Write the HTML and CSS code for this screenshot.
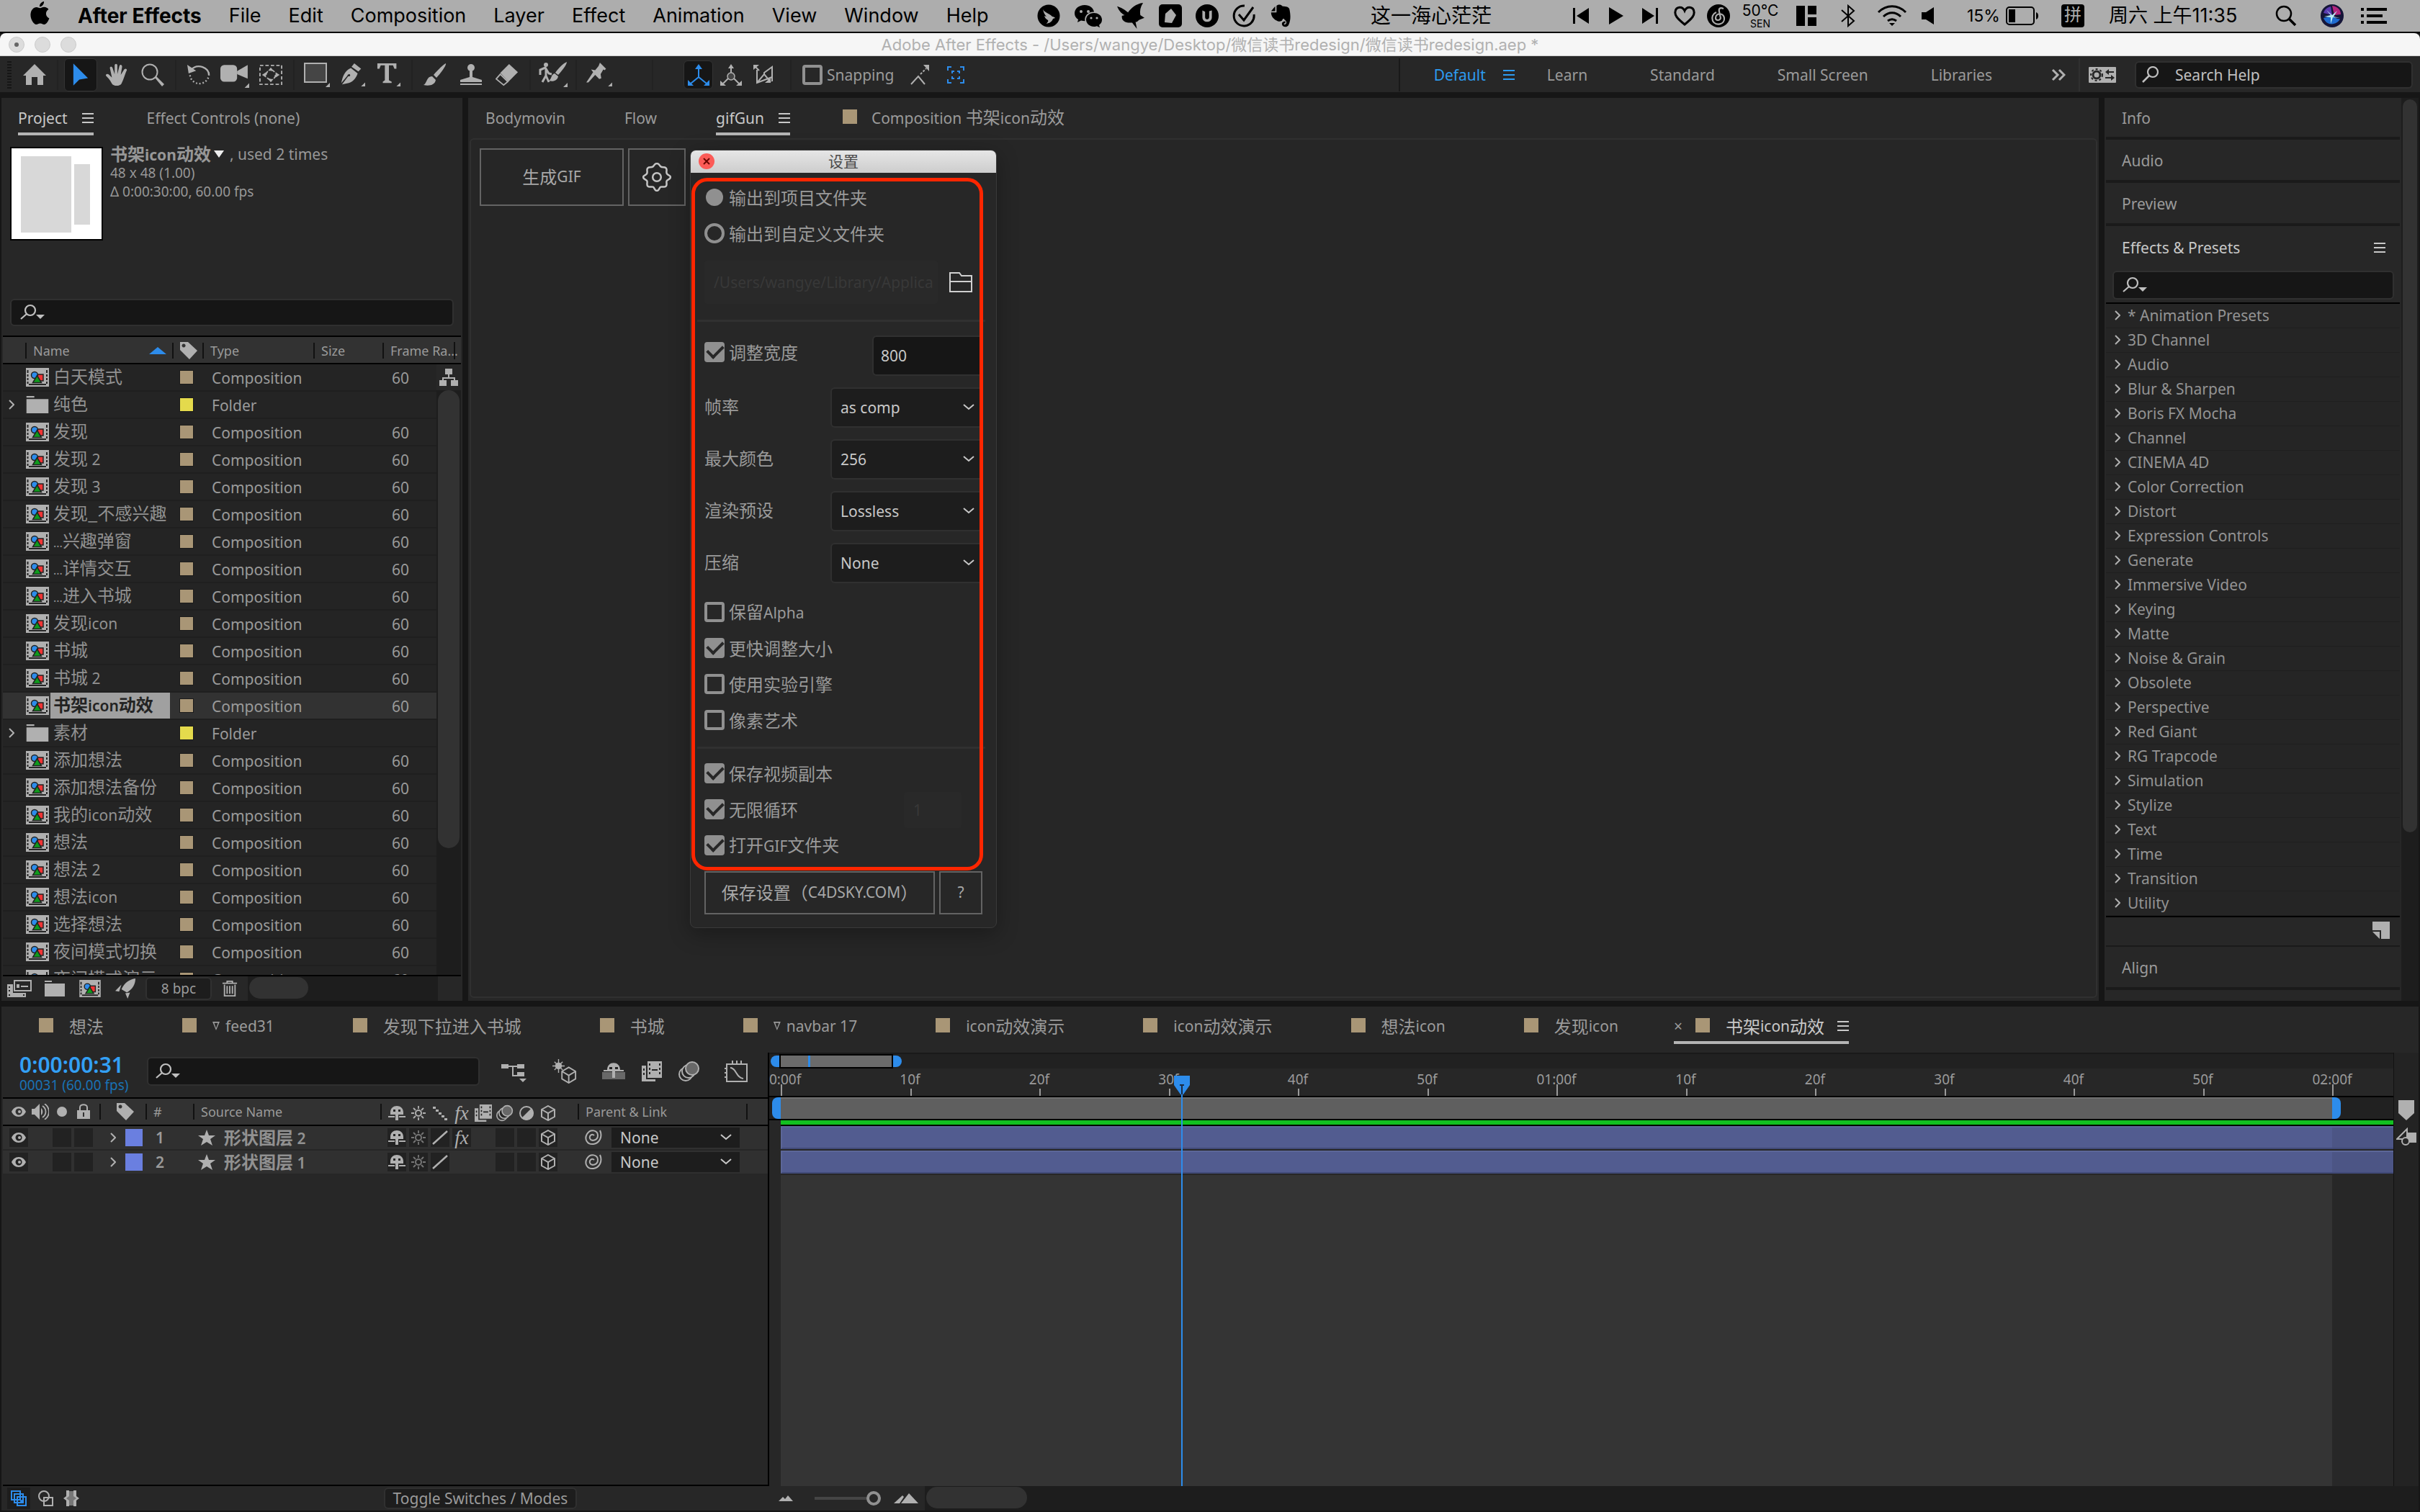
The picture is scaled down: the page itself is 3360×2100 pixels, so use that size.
FILE: index.html
```html
<!DOCTYPE html>
<html lang="zh-CN">
<head>
<meta charset="utf-8">
<title>Adobe After Effects</title>
<link rel="stylesheet" href="styles.css">
</head>
<body>
<svg class="sprite" aria-hidden="true">
  <symbol id="apple" viewBox="0 0 28 34"><path d="M19 0c.4 3.700-2.800 7.300-6 7.200C12.500 3.800 15.800.4 19 0zM13.800 9.200c1.200 0 3-1.500 5.600-1.400 2.500.1 4.700 1.200 6 3.200-5.200 3.200-4.300 10.200 1 12.400-1.200 3.500-4 8.400-6.900 8.500-2.300.1-3-1.400-5.600-1.400s-3.500 1.400-5.600 1.400C4.800 32-.2 24.300.5 17.300 1 11.700 4.600 8 8.500 7.900c2.300 0 4 1.300 5.300 1.300z"/></symbol>
  <symbol id="dove" viewBox="0 0 32 32"><circle cx="16" cy="16" r="15.500"/><path d="M8 7c3 5 8 5 13 10 2 0 3 1 4 2l-3 1c-2 6-7 6-9 7 1-2 3-3 2-5-3-2-4-3-5-6l3 1c-3-3-4-6-5-10z" fill="#adadad"/></symbol>
  <symbol id="wechat" viewBox="0 0 40 34"><path d="M15 2C7 2 1 7 1 13.500c0 4 2 6.500 5 8.500l-1 4 5-2.500c2 .5 3.500.7 5.500.7C14 17 20 11 28 11.500 27 6 22 2 15 2z"/><path d="M28 13c-7 0-11 4.500-11 9.500S22 32 28 32c1.500 0 3-.3 4-.7l4 2-1-3.500c2.500-2 4-4 4-7.300C39 17 34 13 28 13z"/><g fill="#adadad"><circle cx="10" cy="11" r="2"/><circle cx="20" cy="11" r="2"/><circle cx="24" cy="20" r="1.600"/><circle cx="32" cy="20" r="1.600"/></g></symbol>
  <symbol id="bird" viewBox="0 0 40 38"><path d="M0 5c6 2 10 4 16 9C20 8 28 1 38 0c-4 6-5 12-4 18l6 4-8 3c-2 2-3 3-5 3l2 10-7-9C12 30 6 26 7 19l4-1C5 15 2 10 0 5z"/></symbol>
  <symbol id="cardapp" viewBox="0 0 32 32"><rect width="32" height="32" rx="5"/><path d="M17 6l7 9-6 11-10-1 1-12z" fill="#adadad"/></symbol>
  <symbol id="uapp" viewBox="0 0 34 34"><circle cx="17" cy="17" r="17"/><path d="M10 9v10c0 9 14 9 14 0V9l-4 1v9c0 4-6 4-6 0v-8z" fill="#adadad"/><path d="M15 8l3 0v11l-3 0z"/></symbol>
  <symbol id="tickapp" viewBox="0 0 32 32"><path d="M17 2A14 14 0 1 0 30 14M9 14l7 8L29 4" fill="none" stroke="#000" stroke-width="3"/></symbol>
  <symbol id="elephant" viewBox="0 0 30 34"><path d="M9 2c4-3 8-1 9 1 5 0 9 1 10 4 2 9 2 17-1 23-2 5-10 4-10-1 0-4 5-4 5-4v3c-3 0-2 2-1 2 4-1 3-6 0-7-1-2-2-2-3-1-1 4-6 4-9 2C3 21 1 16 1 12h8z"/><path d="M7 3v7H1z"/></symbol>
  <symbol id="prev" viewBox="0 0 24 24"><path d="M1 1h3v22H1zM23 1v22L6 12z"/></symbol>
  <symbol id="play" viewBox="0 0 20 24"><path d="M0 0l20 12L0 24z"/></symbol>
  <symbol id="next" viewBox="0 0 24 24"><path d="M20 1h3v22h-3zM1 1l17 11L1 23z"/></symbol>
  <symbol id="heart" viewBox="0 0 30 28"><path d="M15 26C4 17 1 13 2 8c1-7 10-8 13-1 3-7 12-6 13 1 1 5-2 9-13 18z" fill="none" stroke="#000" stroke-width="3"/></symbol>
  <symbol id="netease" viewBox="0 0 32 32"><circle cx="16" cy="16" r="16"/><path d="M23 6c-5-2-7 0-6 4l2 9c-1 4-7 4-7 0 0-7 11-8 12 0 1 9-12 12-16 4-2-5 0-10 5-12" fill="none" stroke="#adadad" stroke-width="2.200"/></symbol>
  <symbol id="tiles" viewBox="0 0 28 28"><path d="M0 0h12v28H0zM16 0h12v12H16zM16 16h12v12H16z"/></symbol>
  <symbol id="bt" viewBox="0 0 20 32"><path d="M1 8l17 15-8 7V2l8 7L1 24" fill="none" stroke="#000" stroke-width="2"/></symbol>
  <symbol id="wifi" viewBox="0 0 42 30"><path d="M2 10c11-11 27-11 38 0M9 16c7-7 17-7 24 0M15 22c4-3 8-3 12 0" fill="none" stroke="#000" stroke-width="3"/><path d="M17 25h8l-4 4z"/></symbol>
  <symbol id="vol" viewBox="0 0 18 24"><path d="M0 7h6l11-7v24L6 17H0z"/></symbol>
  <symbol id="battery" viewBox="0 0 46 26"><rect x="1" y="1" width="38" height="24" rx="4" fill="none" stroke="#000" stroke-width="2"/><path d="M4 4h9v18H4zM42 8c4 1 4 9 0 10z"/></symbol>
  <symbol id="glass" viewBox="0 0 30 30"><circle cx="12" cy="12" r="10" fill="none" stroke="#000" stroke-width="2.500"/><path d="M19 19l9 9" stroke="#000" stroke-width="3.500"/></symbol>
  <symbol id="siri" viewBox="0 0 32 32"><circle cx="16" cy="16" r="16" fill="#151538"/><path d="M16 2c8 1 12 6 12 12l-9 1z" fill="#b3257e"/><path d="M4 12c2-6 6-8 10-9l2 12z" fill="#5b3bb0"/><path d="M4 19c5-1 10-2 12-4 3 4 8 6 11 5-3 8-18 12-23-1z" fill="#1f6bd0"/><path d="M8 8l8 7 7-6-5 8 9 2-10-1-3 9 0-9-9-1 9-2z" fill="#b8eef5"/></symbol>
  <symbol id="list" viewBox="0 0 36 22"><path d="M0 0h4v4H0zM8 0h28v4H8zM0 9h4v4H0zM8 9h22v4H8zM0 18h4v4H0zM8 18h28v4H8z"/></symbol>

  <symbol id="home" viewBox="0 0 32 32"><path d="M16 1L0 17h4v13h8V19h8v11h8V17h4z"/></symbol>
  <symbol id="arrow" viewBox="0 0 26 34"><path d="M2 0l22 22-13 2L2 33z"/></symbol>
  <symbol id="hand" viewBox="0 0 32 34"><path d="M9 30C6 24 3 21 0 18c0-3 3-3 5-1l4 4L6 7c0-3 3-3 4 0l3 9V3c0-3 4-3 4 0v13l3-12c1-3 4-2 4 1l-2 12 5-8c2-2 4-1 4 1-3 6-4 12-8 20-2 4-12 4-14 0z"/></symbol>
  <symbol id="zoomtool" viewBox="0 0 32 32"><circle cx="12" cy="12" r="10.500" fill="none" stroke="currentColor" stroke-width="2"/><path d="M19 20l2-2 11 11-3 3z"/></symbol>
  <symbol id="rotate" viewBox="0 0 34 32"><path d="M5 9c10-11 28-4 27 8" fill="none" stroke="currentColor" stroke-width="2.500"/><path d="M0 1l2 13 11-4z"/><path d="M31 20A14 14 0 0 1 4 16" fill="none" stroke="currentColor" stroke-width="2.500" stroke-dasharray="2 3"/></symbol>
  <symbol id="camera" viewBox="0 0 38 34"><rect y="4" width="22" height="22" rx="5"/><path d="M22 12l14-8v18l-14-6zM38 28v6h-6z"/></symbol>
  <symbol id="panbehind" viewBox="0 0 34 30"><rect x="1" y="1" width="32" height="28" fill="none" stroke="currentColor" stroke-width="2" stroke-dasharray="5 3"/><path d="M17 4l4 5h-8zM17 26l4-5h-8zM4 15l6-4v8zM30 15l-6-4v8z"/><circle cx="17" cy="15" r="7" fill="none" stroke="currentColor" stroke-width="2" stroke-dasharray="6 5"/></symbol>
  <symbol id="rect" viewBox="0 0 36 34"><rect x="1" y="1" width="30" height="26" fill="#454545" stroke="currentColor" stroke-width="2"/><path d="M36 28v6h-6z"/></symbol>
  <symbol id="pen" viewBox="0 0 36 36"><path d="M20 1l10 8-4 4-10-7zM15 8l10 8c-3 8-7 12-13 14l-10 2 9-12c3 1 4-2 2-3-2 0-3 1-3 2L1 30C3 20 6 12 15 8zM36 29v6h-6z"/></symbol>
  <symbol id="type" viewBox="0 0 34 36"><path d="M0 1h28v8h-3l-2-5h-6v22l4 2v2H8v-2l3-2V4H5L3 9H0zM34 29v6h-6z"/></symbol>
  <symbol id="brush" viewBox="0 0 32 32"><path d="M31 0c1 3-8 15-13 20l-4-4C20 9 28 1 31 0zM12 18l5 5c-1 7-9 9-17 7 5-2 4-12 12-12z"/></symbol>
  <symbol id="stamp" viewBox="0 0 32 30"><circle cx="16" cy="5" r="5"/><path d="M14 9h4v9l13 4v3H1v-3l13-4zM1 27h30v2H1z"/></symbol>
  <symbol id="eraser" viewBox="0 0 34 32"><path d="M20 0l13 12-14 14L7 13z"/><path d="M7 15l11 11-6 5L1 22z" fill="none" stroke="currentColor" stroke-width="2"/></symbol>
  <symbol id="roto" viewBox="0 0 40 36"><circle cx="10" cy="4" r="3"/><path d="M2 18V11l7-3 5 8 4 1M10 10v9l-5 9M10 19l4 9" fill="none" stroke="currentColor" stroke-width="3"/><path d="M39 0c0 4-8 14-12 18l-4-3C27 9 34 2 39 0zM22 16l5 4c-1 6-7 8-13 6 4-2 3-9 8-10zM40 29v6h-6z"/></symbol>
  <symbol id="pin" viewBox="0 0 38 36"><path d="M20 0l9 9-2 2-2-1-4 7 1 6-3 1-6-6L3 29l-3 0 10-15-3-4 6 1 5-6zM38 29v6h-6z"/></symbol>
  <symbol id="axis" viewBox="0 0 30 30"><path d="M15 4v14L4 27M15 18l11 9" fill="none" stroke="currentColor" stroke-width="2"/><path d="M15 0l5 7H10zM0 22v8h8zM30 22v8h-8z"/></symbol>
  <symbol id="worldaxis" viewBox="0 0 30 30"><path d="M15 4v8M11 20l-7 7M19 20l7 7" fill="none" stroke="currentColor" stroke-width="2"/><circle cx="15" cy="17" r="5" fill="#454545" stroke="currentColor" stroke-width="1.500"/><path d="M15 0l4 6h-8zM0 23v7h8zM30 23v7h-8z"/></symbol>
  <symbol id="viewaxis" viewBox="0 0 30 30"><path d="M3 3l6 6M6 8v18l21-8M16 14V12L27 4v20M6 26l10-12 9 11" fill="none" stroke="currentColor" stroke-width="2"/><path d="M1 1h8L1 8zM17 26h8v-7z"/></symbol>
  <symbol id="snapa" viewBox="0 0 28 28"><path d="M1 27l10-11 9 11" fill="none" stroke="currentColor" stroke-width="2"/><path d="M14 13l8-8" stroke="currentColor" stroke-width="2" stroke-dasharray="3 2"/><path d="M18 0h8v9z"/></symbol>
  <symbol id="snapb" viewBox="0 0 24 24"><path d="M1 6V1h5M18 1h5v5M23 18v5h-5M6 23H1v-5M7 10V7h3M14 7h3v3M17 14v3h-3M10 17H7v-3" fill="none" stroke="currentColor" stroke-width="2"/></symbol>
  <symbol id="menu" viewBox="0 0 16 14"><path d="M0 0h16v2H0zM0 6h16v2H0zM0 12h16v2H0z"/></symbol>
  <symbol id="more" viewBox="0 0 20 16"><path d="M2 1l7 7-7 7M11 1l7 7-7 7" fill="none" stroke="currentColor" stroke-width="3"/></symbol>
  <symbol id="sync" viewBox="0 0 38 22"><rect width="38" height="22" rx="1"/><g fill="none" stroke="#272727"><circle cx="11" cy="11" r="5" stroke-width="3"/><circle cx="11" cy="11" r="8" stroke-width="2" stroke-dasharray="3 3"/><path d="M26 7h9M23 15h9" stroke-width="2"/></g><path d="M28 3v8l-5-4zM31 11v8l5-4z" fill="#272727"/></symbol>
  <symbol id="find" viewBox="0 0 24 24"><circle cx="15" cy="8" r="7" fill="none" stroke="currentColor" stroke-width="2.200"/><path d="M10 13L1 22" stroke="currentColor" stroke-width="2.500"/></symbol>
  <symbol id="finddrop" viewBox="0 0 34 22"><circle cx="14" cy="8" r="7" fill="none" stroke="currentColor" stroke-width="2.200"/><path d="M9 13L1 20" stroke="currentColor" stroke-width="2.200"/><path d="M22 14h12l-6 6z"/></symbol>

  <symbol id="comp" viewBox="0 0 32 26"><path d="M0 0h32v26H0z" fill="#b0b0b0"/><path d="M1.500 3h2v4h-2zM1.500 9h2v3h-2zM1.500 14h2v3h-2zM1.500 19h2v3h-2zM28 3h2v4h-2zM28 9h2v3h-2zM28 14h2v3h-2zM28 19h2v3h-2zM4 22h24v2H4z" fill="#262626"/><rect x="16" y="9" width="8" height="9" fill="#f03434" stroke="#222" stroke-width="1.500"/><circle cx="12" cy="10" r="4.500" fill="#2d8ceb" stroke="#222" stroke-width="1.500"/><path d="M15.500 10.500l6 10h-12z" fill="#0f9a1c" stroke="#222" stroke-width="1.500"/></symbol>
  <symbol id="folder" viewBox="0 0 28 22"><path d="M0 0h10v2H0zM0 4h28v18H0z"/></symbol>
  <symbol id="chev" viewBox="0 0 8 14"><path d="M1 1l6 6-6 6" fill="none" stroke="currentColor" stroke-width="2"/></symbol>
  <symbol id="chevd" viewBox="0 0 16 10"><path d="M1 1l7 6 7-6" fill="none" stroke="currentColor" stroke-width="2"/></symbol>
  <symbol id="tag" viewBox="0 0 24 24"><path fill-rule="evenodd" d="M0 0h11l13 12-11 12L0 11zM5 2.500a2.500 2.500 0 1 0 .1 0z"/></symbol>
  <symbol id="tree" viewBox="0 0 26 24"><path d="M8 0h10v8H8zM0 16h10v8H0zM16 16h10v8H16zM12 8h2v4h8v4h-2v-2H6v2H4v-4h8z"/></symbol>
  <symbol id="footage" viewBox="0 0 34 24"><path d="M10 1h23v14H10z" fill="none" stroke="currentColor" stroke-width="2"/><path d="M13 6h4v5h-4zM19 8h10v2H19zM0 6h8v12h18v6H0z"/><path d="M2 9h2v2H2zM2 14h2v2H2zM2 20h2v2H2zM22 20h2v2h-2z" fill="#262626"/></symbol>
  <symbol id="rocket" viewBox="0 0 26 26"><path d="M26 0c0 8-4 14-11 18l-7-4C12 5 19 1 26 0zM8 8l-8 8 5 1zM19 18l-3 8-3-7z"/></symbol>
  <symbol id="trash" viewBox="0 0 22 24"><path d="M0 4h22M7 4V1h8v3M3 6v17h16V6M7 8v12M11 8v12M15 8v12" fill="none" stroke="currentColor" stroke-width="2"/></symbol>
  <symbol id="newitem" viewBox="0 0 24 24"><path d="M0 0h24v24H12V12H0zM0 14h10v10z"/></symbol>
  <symbol id="gear" viewBox="1 1 38 38"><path d="M20 2c3 0 3 2 5 4s5 0 7 2 0 4 1 7 5 2 5 5-4 3-5 5 1 5-1 7-5 0-7 1-2 5-5 5-3-4-5-5-5 1-7-1 0-5-1-7-5-2-5-5 4-2 5-5-1-5 1-7 5 0 7-2 2-4 5-4z" fill="none" stroke="currentColor" stroke-width="2.400"/><circle cx="20" cy="20" r="5.500" fill="none" stroke="currentColor" stroke-width="2.400"/></symbol>
  <symbol id="openfolder" viewBox="0 0 32 28"><path d="M1 1h13l3 4h14v22H1zM1 13h30" fill="none" stroke="currentColor" stroke-width="2"/></symbol>

  <symbol id="flow" viewBox="0 0 36 30"><path d="M0 5h10v6H0zM22 5h10v6H22zM22 16h10v6H22zM10 7h12v2H10zM15 8h2v12h5v2h-7zM25 25h10l-5 5z"/></symbol>
  <symbol id="draft3d" viewBox="0 0 36 36"><circle cx="9" cy="10" r="5"/><path d="M9 0v20M0 10h18M3 4l12 12M15 4L3 16" stroke="currentColor" stroke-width="1.500"/><path d="M24 12l10 6v11l-10 6-10-6V18zM14 18l10 6 10-6M24 24v11" fill="none" stroke="currentColor" stroke-width="2"/></symbol>
  <symbol id="shyall" viewBox="0 0 32 26"><path d="M0 14h32v10H0z" fill="#686868"/><path d="M7 11C7-2 25-2 25 11h5v2H18v9h-4v-9H2v-2z"/><path d="M10 7h4v3h-4zM18 7h4v3h-4z" fill="#262626"/></symbol>
  <symbol id="frameblend" viewBox="0 0 28 28"><path d="M8 0h20v23H8zM0 6h6v19h13v3H0z"/><path d="M10 3h2v3h-2zM10 9h2v3h-2zM10 15h2v3h-2zM24 3h2v3h-2zM24 9h2v3h-2zM24 15h2v3h-2zM14 11h8v2h-8zM2 10h2v3H2zM2 16h2v3H2z" fill="#262626"/></symbol>
  <symbol id="mblur" viewBox="0 0 30 28"><g fill="#686868" stroke="currentColor" stroke-width="2"><circle cx="10" cy="18" r="9" fill="none"/><circle cx="14" cy="14" r="9" fill="#262626"/><circle cx="19" cy="10" r="9"/></g></symbol>
  <symbol id="graphed" viewBox="0 0 32 30"><path d="M3 5h28v24H3zM8 10c8 0 8 14 18 15M11 0v5M17 0v5M23 0v5M0 11h3M0 17h3M0 23h3" fill="none" stroke="currentColor" stroke-width="2"/></symbol>
  <symbol id="eye" viewBox="0 0 20 14"><path fill-rule="evenodd" d="M10 0c5 0 8 3 10 7-2 4-5 7-10 7S2 11 0 7c2-4 5-7 10-7zM10 2.500a4.500 4.500 0 1 0 .1 0z"/><circle cx="11" cy="7" r="2"/></symbol>
  <symbol id="audio" viewBox="0 0 24 22"><path d="M0 7h4l7-7v22l-7-7H0zM13 6c3 2 3 8 0 10v-3z"/><path d="M15 3c6 4 6 12 0 16M18 0c8 6 8 16 0 22" fill="none" stroke="currentColor" stroke-width="1.800"/></symbol>
  <symbol id="dot" viewBox="0 0 14 14"><circle cx="7" cy="7" r="7"/></symbol>
  <symbol id="lock" viewBox="0 0 18 22"><path d="M0 9h18v12H0z"/><path d="M4 9V5c0-5 10-5 10 0v4" fill="none" stroke="currentColor" stroke-width="2"/><path d="M8 12h2v6H8z" fill="#323232"/></symbol>
  <symbol id="shy" viewBox="0 0 24 20"><path d="M3 9C3-3 21-3 21 9v3h-7v8h-4v-8H3zM0 14h9v2H0zM15 14h9v2h-9z"/><path d="M7 5h3v3H7zM14 5h3v3h-3z" fill="#262626"/></symbol>
  <symbol id="sun" viewBox="0 0 20 20"><circle cx="10" cy="10" r="4" fill="none" stroke="currentColor" stroke-width="2"/><path d="M10 0v4M10 16v4M0 10h4M16 10h4M3 3l3 3M14 14l3 3M17 3l-3 3M6 14l-3 3" stroke="currentColor" stroke-width="1.800"/></symbol>
  <symbol id="qual" viewBox="0 0 20 20"><path d="M0 1h4v3H0zM4 5h4v3H4zM8 9h4v3H8zM12 13h4v3h-4zM16 17h4v3h-4z"/></symbol>
  <symbol id="slash" viewBox="0 0 22 20"><path d="M1 19L21 1" stroke="currentColor" stroke-width="2.500"/></symbol>
  <symbol id="adj" viewBox="0 0 20 20"><circle cx="10" cy="10" r="9" fill="none" stroke="currentColor" stroke-width="2"/><path d="M17 3a9.900 9.900 0 0 1-14 14z"/></symbol>
  <symbol id="cube" viewBox="0 0 22 22"><path d="M11 1l9 5v10l-9 5-9-5V6zM2 6l9 5 9-5M11 11v10" fill="none" stroke="currentColor" stroke-width="2"/></symbol>
  <symbol id="swirl" viewBox="0 0 24 22"><path d="M21 1c4 9-1 18-9 19C3 21-1 13 3 6 8-2 18 1 18 8c0 7-9 9-11 4-1-4 3-7 6-4" fill="none" stroke="currentColor" stroke-width="2"/></symbol>
  <symbol id="star" viewBox="0 0 24 22"><path d="M12 0l3 8h9l-7 5 3 9-8-5-8 5 3-9-7-5h9z"/></symbol>
  <symbol id="markerbin" viewBox="0 0 22 28"><path d="M0 0h22v18L11 28 0 18z"/></symbol>
  <symbol id="compbtn" viewBox="0 0 28 26"><path d="M14 6h14v14H14z"/><path d="M1 15L15 1v14z" fill="#262626" stroke="currentColor" stroke-width="2"/><circle cx="13" cy="18" r="5" fill="#262626" stroke="currentColor" stroke-width="2"/></symbol>
  <symbol id="playhead" viewBox="0 0 22 26"><path d="M0 0h22v13L13 26H9L0 13z" fill="#2d8ceb"/><path d="M8 12h6v2h-2v12h-2V14H8z" fill="#1a2c44"/></symbol>
  <symbol id="layers1" viewBox="0 0 22 22"><g fill="#1d1d1d" stroke="currentColor" stroke-width="2"><path d="M1 1h12v12H1zM5 5h12v12H5zM9 9h12v12H9z"/></g><circle cx="15" cy="15" r="2"/></symbol>
  <symbol id="layers2" viewBox="0 0 22 22"><g fill="none" stroke="currentColor" stroke-width="2"><circle cx="9" cy="8" r="7"/><path d="M9 10h12v11H9z"/></g></symbol>
  <symbol id="layers3" viewBox="0 0 22 22"><path d="M7 1h8v7l4 3-4 3v7H7v-7l-4-3 4-3z" fill="#777"/><path d="M4 0h4v8l-4 3 4 3v8H4v-8l-4-3 4-3zM18 0h-4v8l4 3-4 3v8h4v-8l4-3-4-3z"/></symbol>
  <symbol id="mount1" viewBox="0 0 20 8"><path d="M0 8l6-6 3 3 4-5 7 8z"/></symbol>
  <symbol id="mount2" viewBox="0 0 34 14"><path d="M0 14L12 3l2 2-6 9zM10 14L21 0l13 14z"/></symbol>
</svg>

<header class="menubar">
  <nav class="menubar__menus">
    <svg class="ic-apple"><use href="#apple"/></svg>
    <button class="menu menu--app">After Effects</button><button class="menu">File</button><button class="menu">Edit</button><button class="menu">Composition</button><button class="menu">Layer</button><button class="menu">Effect</button><button class="menu">Animation</button><button class="menu">View</button><button class="menu">Window</button><button class="menu">Help</button>
  </nav>
  <div class="menubar__apps">
    <svg class="w32"><use href="#dove"/></svg><svg class="w40"><use href="#wechat"/></svg><svg class="w40"><use href="#bird"/></svg><svg class="w32"><use href="#cardapp"/></svg><svg class="w32"><use href="#uapp"/></svg><svg class="w32"><use href="#tickapp"/></svg><svg class="w32"><use href="#elephant"/></svg>
    <span class="lyric">这一海心茫茫</span>
  </div>
  <div class="menubar__status">
    <svg class="s24"><use href="#prev"/></svg><svg class="s20 h24"><use href="#play"/></svg><svg class="s24"><use href="#next"/></svg><svg class="s30"><use href="#heart"/></svg><svg class="w32"><use href="#netease"/></svg>
    <span class="sensor"><b>50°C</b><small>SEN</small></span>
    <svg class="s28"><use href="#tiles"/></svg><svg class="s20 h32"><use href="#bt"/></svg><svg class="s42"><use href="#wifi"/></svg><svg class="s18"><use href="#vol"/></svg>
    <span class="charge">15%</span><svg class="s46"><use href="#battery"/></svg><span class="ime">拼</span><span class="clock">周六 上午11:35</span>
    <svg class="s30"><use href="#glass"/></svg><svg class="w32"><use href="#siri"/></svg><svg class="s36"><use href="#list"/></svg>
  </div>
</header>

<div class="titlebar">
  <div class="titlebar__lights"><i class="light light--edited"></i><i class="light"></i><i class="light"></i></div>
  <h1 class="titlebar__title">Adobe After Effects - /Users/wangye/Desktop/微信读书redesign/微信读书redesign.aep *</h1>
</div>

<div class="toolbar">
  <div class="tools tools--home"><i class="grip"></i><button class="tool" aria-label="Home"><svg class="w32"><use href="#home"/></svg></button></div>
  <div class="tools"><button class="tool tool--on" aria-label="Selection"><svg class="s24 h34"><use href="#arrow"/></svg></button><button class="tool" aria-label="Hand"><svg class="w32"><use href="#hand"/></svg></button><button class="tool" aria-label="Zoom"><svg class="w32"><use href="#zoomtool"/></svg></button></div>
  <div class="tools"><button class="tool" aria-label="Rotate"><svg class="w32"><use href="#rotate"/></svg></button><button class="tool" aria-label="Camera"><svg class="w40"><use href="#camera"/></svg></button><button class="tool" aria-label="Pan Behind"><svg class="w32"><use href="#panbehind"/></svg></button></div>
  <div class="tools"><button class="tool" aria-label="Rectangle"><svg class="s36"><use href="#rect"/></svg></button><button class="tool" aria-label="Pen"><svg class="s36"><use href="#pen"/></svg></button><button class="tool" aria-label="Type"><svg class="s36"><use href="#type"/></svg></button></div>
  <div class="tools"><button class="tool" aria-label="Brush"><svg class="w32"><use href="#brush"/></svg></button><button class="tool" aria-label="Clone Stamp"><svg class="w32"><use href="#stamp"/></svg></button><button class="tool" aria-label="Eraser"><svg class="w32"><use href="#eraser"/></svg></button></div>
  <div class="tools"><button class="tool" aria-label="Roto Brush"><svg class="w40"><use href="#roto"/></svg></button></div>
  <div class="tools tools--last"><button class="tool" aria-label="Puppet Pin"><svg class="s36"><use href="#pin"/></svg></button></div>
  <div class="tools tools--axes"><button class="tool tool--on tool--small" aria-label="Local Axis"><svg class="s30"><use href="#axis"/></svg></button><button class="tool tool--small" aria-label="World Axis"><svg class="s30"><use href="#worldaxis"/></svg></button><button class="tool tool--small" aria-label="View Axis"><svg class="s30"><use href="#viewaxis"/></svg></button></div>
  <label class="snapping"><input type="checkbox" class="check">Snapping</label>
  <svg class="s28 snap-ic"><use href="#snapa"/></svg><svg class="s24 snap-ic blue"><use href="#snapb"/></svg>
  <nav class="workspaces">
    <button class="ws ws--on">Default <svg class="s16"><use href="#menu"/></svg></button><button class="ws">Learn</button><button class="ws">Standard</button><button class="ws">Small Screen</button><button class="ws">Libraries</button>
  </nav>
  <svg class="s20 more"><use href="#more"/></svg>
  <div class="help"><svg class="sync"><use href="#sync"/></svg>
    <label class="searchbox searchbox--help"><svg class="s24"><use href="#find"/></svg><input type="text" value="Search Help" aria-label="Search Help"></label></div>
</div>

<main class="panels">
  <section class="project">
    <div class="tabs"><button class="tab tab--on">Project <svg class="s16"><use href="#menu"/></svg></button><button class="tab tab--second">Effect Controls (none)</button></div>
    <div class="info">
      <div class="thumb"><i class="thumb__big"></i><i class="thumb__small"></i></div>
      <div class="info__text">
        <p class="info__name"><b><span class="zh">书架</span>icon<span class="zh">动效</span></b><i class="tri"></i>, used 2 times</p>
        <p>48 x 48 (1.00)</p><p>Δ 0:00:30:00, 60.00 fps</p>
      </div>
    </div>
    <label class="searchbox searchbox--project"><svg class="s34"><use href="#finddrop"/></svg><input type="text" aria-label="Search project"></label>
    <div class="files">
      <table class="filetable">
        <colgroup><col class="c-tw"><col class="c-name"><col class="c-tag"><col class="c-type"><col class="c-size"><col class="c-rate"><col class="c-bar"></colgroup>
        <thead><tr><th></th><th class="th"><span class="th__sort">Name<i class="sortmark"></i></span></th><th class="th"><svg class="s24 tagicon"><use href="#tag"/></svg></th><th class="th">Type</th><th class="th">Size</th><th class="th" colspan="2"><span class="th__rate">Frame Ra...</span></th></tr></thead>
        <tbody>
        <tr><td></td><td class="nm"><svg class="ci"><use href="#comp"/></svg><span class="lbl"><span class="zh">白天模式</span></span></td><td><i class="sw"></i></td><td>Composition</td><td></td><td class="num">60</td><td class="bar" rowspan="23"><svg class="tree"><use href="#tree"/></svg><i class="thumbbar"></i></td></tr>
        <tr><td class="tw"><svg class="chev"><use href="#chev"/></svg></td><td class="nm"><svg class="ci ci--folder"><use href="#folder"/></svg><span class="lbl"><span class="zh">纯色</span></span></td><td><i class="sw sw--y"></i></td><td>Folder</td><td></td><td></td></tr>
        <tr><td></td><td class="nm"><svg class="ci"><use href="#comp"/></svg><span class="lbl"><span class="zh">发现</span></span></td><td><i class="sw"></i></td><td>Composition</td><td></td><td class="num">60</td></tr>
        <tr><td></td><td class="nm"><svg class="ci"><use href="#comp"/></svg><span class="lbl"><span class="zh">发现</span> 2</span></td><td><i class="sw"></i></td><td>Composition</td><td></td><td class="num">60</td></tr>
        <tr><td></td><td class="nm"><svg class="ci"><use href="#comp"/></svg><span class="lbl"><span class="zh">发现</span> 3</span></td><td><i class="sw"></i></td><td>Composition</td><td></td><td class="num">60</td></tr>
        <tr><td></td><td class="nm"><svg class="ci"><use href="#comp"/></svg><span class="lbl"><span class="zh">发现_不感兴趣</span></span></td><td><i class="sw"></i></td><td>Composition</td><td></td><td class="num">60</td></tr>
        <tr><td></td><td class="nm"><svg class="ci"><use href="#comp"/></svg><span class="lbl"><span class="dots">...</span><span class="zh">兴趣弹窗</span></span></td><td><i class="sw"></i></td><td>Composition</td><td></td><td class="num">60</td></tr>
        <tr><td></td><td class="nm"><svg class="ci"><use href="#comp"/></svg><span class="lbl"><span class="dots">...</span><span class="zh">详情交互</span></span></td><td><i class="sw"></i></td><td>Composition</td><td></td><td class="num">60</td></tr>
        <tr><td></td><td class="nm"><svg class="ci"><use href="#comp"/></svg><span class="lbl"><span class="dots">...</span><span class="zh">进入书城</span></span></td><td><i class="sw"></i></td><td>Composition</td><td></td><td class="num">60</td></tr>
        <tr><td></td><td class="nm"><svg class="ci"><use href="#comp"/></svg><span class="lbl"><span class="zh">发现</span>icon</span></td><td><i class="sw"></i></td><td>Composition</td><td></td><td class="num">60</td></tr>
        <tr><td></td><td class="nm"><svg class="ci"><use href="#comp"/></svg><span class="lbl"><span class="zh">书城</span></span></td><td><i class="sw"></i></td><td>Composition</td><td></td><td class="num">60</td></tr>
        <tr><td></td><td class="nm"><svg class="ci"><use href="#comp"/></svg><span class="lbl"><span class="zh">书城</span> 2</span></td><td><i class="sw"></i></td><td>Composition</td><td></td><td class="num">60</td></tr>
        <tr class="sel"><td></td><td class="nm"><svg class="ci"><use href="#comp"/></svg><span class="lbl"><span class="zh">书架</span>icon<span class="zh">动效</span></span></td><td><i class="sw"></i></td><td>Composition</td><td></td><td class="num">60</td></tr>
        <tr><td class="tw"><svg class="chev"><use href="#chev"/></svg></td><td class="nm"><svg class="ci ci--folder"><use href="#folder"/></svg><span class="lbl"><span class="zh">素材</span></span></td><td><i class="sw sw--y"></i></td><td>Folder</td><td></td><td></td></tr>
        <tr><td></td><td class="nm"><svg class="ci"><use href="#comp"/></svg><span class="lbl"><span class="zh">添加想法</span></span></td><td><i class="sw"></i></td><td>Composition</td><td></td><td class="num">60</td></tr>
        <tr><td></td><td class="nm"><svg class="ci"><use href="#comp"/></svg><span class="lbl"><span class="zh">添加想法备份</span></span></td><td><i class="sw"></i></td><td>Composition</td><td></td><td class="num">60</td></tr>
        <tr><td></td><td class="nm"><svg class="ci"><use href="#comp"/></svg><span class="lbl"><span class="zh">我的</span>icon<span class="zh">动效</span></span></td><td><i class="sw"></i></td><td>Composition</td><td></td><td class="num">60</td></tr>
        <tr><td></td><td class="nm"><svg class="ci"><use href="#comp"/></svg><span class="lbl"><span class="zh">想法</span></span></td><td><i class="sw"></i></td><td>Composition</td><td></td><td class="num">60</td></tr>
        <tr><td></td><td class="nm"><svg class="ci"><use href="#comp"/></svg><span class="lbl"><span class="zh">想法</span> 2</span></td><td><i class="sw"></i></td><td>Composition</td><td></td><td class="num">60</td></tr>
        <tr><td></td><td class="nm"><svg class="ci"><use href="#comp"/></svg><span class="lbl"><span class="zh">想法</span>icon</span></td><td><i class="sw"></i></td><td>Composition</td><td></td><td class="num">60</td></tr>
        <tr><td></td><td class="nm"><svg class="ci"><use href="#comp"/></svg><span class="lbl"><span class="zh">选择想法</span></span></td><td><i class="sw"></i></td><td>Composition</td><td></td><td class="num">60</td></tr>
        <tr><td></td><td class="nm"><svg class="ci"><use href="#comp"/></svg><span class="lbl"><span class="zh">夜间模式切换</span></span></td><td><i class="sw"></i></td><td>Composition</td><td></td><td class="num">60</td></tr>
        <tr><td></td><td class="nm"><svg class="ci"><use href="#comp"/></svg><span class="lbl"><span class="zh">夜间模式演示</span></span></td><td><i class="sw"></i></td><td>Composition</td><td></td><td class="num">60</td></tr>
        </tbody>
      </table>
    </div>
    <div class="projectfoot">
      <div class="projectfoot__icons"><svg class="s34"><use href="#footage"/></svg><svg class="s28"><use href="#folder"/></svg><svg class="s34"><use href="#comp"/></svg><svg class="s28"><use href="#rocket"/></svg></div>
      <button class="bpc">8 bpc</button><svg class="s22"><use href="#trash"/></svg>
      <div class="hscroll"><i class="hscroll__thumb"></i></div>
    </div>
  </section>

  <section class="viewer">
    <div class="tabs tabs--viewer"><button class="tab">Bodymovin</button><button class="tab">Flow</button><button class="tab tab--on">gifGun <svg class="s16"><use href="#menu"/></svg></button><button class="tab tab--comp"><i class="chip"></i><span>Composition <span class="zh">书架</span>icon<span class="zh">动效</span></span></button></div>
    <div class="canvas">
      <button class="outline outline--gif"><span class="zh">生成</span>GIF</button><button class="outline outline--gear" aria-label="设置"><svg class="gear"><use href="#gear"/></svg></button>
    </div>

    <div class="dialog" role="dialog" aria-label="设置">
      <div class="dialog__bar"><button class="close" aria-label="Close"><svg viewBox="0 0 10 10"><path d="M1 1l8 8M9 1L1 9" stroke="#6b0500" stroke-width="2"/></svg></button><h2>设置</h2></div>
      <form class="form">
        <label class="opt opt--radio"><input type="radio" name="out" class="radio" checked><span class="zh">输出到项目文件夹</span></label>
        <label class="opt opt--radio"><input type="radio" name="out" class="radio"><span class="zh">输出到自定义文件夹</span></label>
        <div class="path"><input type="text" class="ghost" value="/Users/wangye/Library/Applica" disabled aria-label="Path"><button type="button" class="browse" aria-label="Browse"><svg class="w32"><use href="#openfolder"/></svg></button></div>
        <hr>
        <div class="field field--width"><label class="opt"><input type="checkbox" class="check" checked><span class="zh">调整宽度</span></label><input type="text" class="box" value="800" aria-label="Width"></div>
        <div class="field"><label for="f1" class="zh">帧率</label><span class="pick"><select id="f1"><option>as comp</option></select><svg class="s16"><use href="#chevd"/></svg></span></div>
        <div class="field"><label for="f2" class="zh">最大颜色</label><span class="pick"><select id="f2"><option>256</option></select><svg class="s16"><use href="#chevd"/></svg></span></div>
        <div class="field"><label for="f3" class="zh">渲染预设</label><span class="pick"><select id="f3"><option>Lossless</option></select><svg class="s16"><use href="#chevd"/></svg></span></div>
        <div class="field"><label for="f4" class="zh">压缩</label><span class="pick"><select id="f4"><option>None</option></select><svg class="s16"><use href="#chevd"/></svg></span></div>
        <div class="checks">
          <label class="opt"><input type="checkbox" class="check"><span><span class="zh">保留</span>Alpha</span></label>
          <label class="opt"><input type="checkbox" class="check" checked><span class="zh">更快调整大小</span></label>
          <label class="opt"><input type="checkbox" class="check"><span class="zh">使用实验引擎</span></label>
          <label class="opt"><input type="checkbox" class="check"><span class="zh">像素艺术</span></label>
        </div>
        <hr>
        <div class="checks">
          <label class="opt"><input type="checkbox" class="check" checked><span class="zh">保存视频副本</span></label>
          <div class="loop"><label class="opt"><input type="checkbox" class="check" checked><span class="zh">无限循环</span></label><input type="text" class="ghost ghost--loop" value="1" disabled aria-label="Loops"></div>
          <label class="opt"><input type="checkbox" class="check" checked><span><span class="zh">打开</span>GIF<span class="zh">文件夹</span></span></label>
        </div>
        <div class="actions"><button type="button" class="outline"><span class="zh">保存设置（</span>C4DSKY.COM<span class="zh">）</span></button><button type="button" class="outline outline--q">?</button></div>
      </form>
      <i class="highlight"></i>
    </div>
  </section>

  <aside class="side">
    <div class="side__col">
      <h3 class="side__tab">Info</h3><h3 class="side__tab">Audio</h3><h3 class="side__tab">Preview</h3>
      <div class="effects">
        <h3 class="side__tab side__tab--on">Effects &amp; Presets <svg class="s16"><use href="#menu"/></svg></h3>
        <label class="searchbox searchbox--fx"><svg class="s34"><use href="#finddrop"/></svg><input type="text" aria-label="Search effects"></label>
        <ul class="fx">
          <li><svg class="chev"><use href="#chev"/></svg>* Animation Presets</li><li><svg class="chev"><use href="#chev"/></svg>3D Channel</li><li><svg class="chev"><use href="#chev"/></svg>Audio</li><li><svg class="chev"><use href="#chev"/></svg>Blur &amp; Sharpen</li><li><svg class="chev"><use href="#chev"/></svg>Boris FX Mocha</li><li><svg class="chev"><use href="#chev"/></svg>Channel</li><li><svg class="chev"><use href="#chev"/></svg>CINEMA 4D</li><li><svg class="chev"><use href="#chev"/></svg>Color Correction</li><li><svg class="chev"><use href="#chev"/></svg>Distort</li><li><svg class="chev"><use href="#chev"/></svg>Expression Controls</li><li><svg class="chev"><use href="#chev"/></svg>Generate</li><li><svg class="chev"><use href="#chev"/></svg>Immersive Video</li><li><svg class="chev"><use href="#chev"/></svg>Keying</li><li><svg class="chev"><use href="#chev"/></svg>Matte</li><li><svg class="chev"><use href="#chev"/></svg>Noise &amp; Grain</li><li><svg class="chev"><use href="#chev"/></svg>Obsolete</li><li><svg class="chev"><use href="#chev"/></svg>Perspective</li><li><svg class="chev"><use href="#chev"/></svg>Red Giant</li><li><svg class="chev"><use href="#chev"/></svg>RG Trapcode</li><li><svg class="chev"><use href="#chev"/></svg>Simulation</li><li><svg class="chev"><use href="#chev"/></svg>Stylize</li><li><svg class="chev"><use href="#chev"/></svg>Text</li><li><svg class="chev"><use href="#chev"/></svg>Time</li><li><svg class="chev"><use href="#chev"/></svg>Transition</li><li><svg class="chev"><use href="#chev"/></svg>Utility</li>
        </ul>
        <div class="fxfoot"><svg class="s24"><use href="#newitem"/></svg></div>
      </div>
      <h3 class="side__tab">Align</h3>
    </div>
    <div class="side__scroll"><i></i></div>
  </aside>
</main>

<section class="timeline">
  <div class="comptabs">
    <button class="ctab"><i class="chip"></i><span class="zh">想法</span></button><button class="ctab"><i class="chip"></i><i class="deltri"></i>feed31</button><button class="ctab"><i class="chip"></i><span class="zh">发现下拉进入书城</span></button><button class="ctab"><i class="chip"></i><span class="zh">书城</span></button><button class="ctab"><i class="chip"></i><i class="deltri"></i>navbar 17</button><button class="ctab"><i class="chip"></i>icon<span class="zh">动效演示</span></button><button class="ctab"><i class="chip"></i>icon<span class="zh">动效演示</span></button><button class="ctab"><i class="chip"></i><span class="zh">想法</span>icon</button><button class="ctab"><i class="chip"></i><span class="zh">发现</span>icon</button><button class="ctab ctab--on"><span class="x">×</span><i class="chip"></i><span class="zh">书架</span>icon<span class="zh">动效</span><svg class="s16"><use href="#menu"/></svg></button>
  </div>
  <div class="tl">
    <div class="layers">
      <div class="layers__top">
        <div class="time"><strong>0:00:00:31</strong><span>00031 (60.00 fps)</span></div>
        <label class="searchbox searchbox--tl"><svg class="s34"><use href="#finddrop"/></svg><input type="text" aria-label="Search layers"></label>
        <div class="modes"><svg class="s36"><use href="#flow"/></svg><svg class="s36"><use href="#draft3d"/></svg><div class="modes__mid"><svg class="w32"><use href="#shyall"/></svg><svg class="s28"><use href="#frameblend"/></svg><svg class="s30"><use href="#mblur"/></svg></div><svg class="w32"><use href="#graphed"/></svg></div>
      </div>
      <div class="lrow lrow--head">
        <span class="av"><svg class="s20"><use href="#eye"/></svg><svg class="s24 h22"><use href="#audio"/></svg><svg class="s14"><use href="#dot"/></svg><svg class="s18 h22"><use href="#lock"/></svg></span>
        <span class="col col--tag"><svg class="s24"><use href="#tag"/></svg></span><span class="col">#</span><span class="col">Source Name</span>
        <span class="col sws"><svg class="s24"><use href="#shy"/></svg><svg class="s20"><use href="#sun"/></svg><svg class="s20"><use href="#qual"/></svg><em>fx</em><svg class="s24"><use href="#frameblend"/></svg><svg class="s24"><use href="#mblur"/></svg><svg class="s20"><use href="#adj"/></svg><svg class="s22"><use href="#cube"/></svg></span>
        <span class="col">Parent &amp; Link</span><span class="col"></span>
      </div>
      <div class="lrow">
        <span class="av"><i class="cell"><svg class="s20"><use href="#eye"/></svg></i><i></i><i class="cell"></i><i class="cell"></i></span>
        <span class="lab"><svg class="chev"><use href="#chev"/></svg><i class="lsw"></i></span><b class="idx">1</b><b class="lname"><svg class="s24"><use href="#star"/></svg><span><span class="zh">形状图层</span> 2</span></b>
        <span class="sws"><i class="cell"><svg class="s24"><use href="#shy"/></svg></i><i class="cell dim"><svg class="s20"><use href="#sun"/></svg></i><i class="cell"><svg class="s22"><use href="#slash"/></svg></i><i class="cell"><em>fx</em></i><i></i><i class="cell"></i><i class="cell"></i><i class="cell"><svg class="s22"><use href="#cube"/></svg></i></span>
        <span class="parent"><svg class="s24"><use href="#swirl"/></svg><span class="pick pick--tl"><select aria-label="Parent of layer 1"><option>None</option></select><svg class="s16"><use href="#chevd"/></svg></span></span>
      </div>
      <div class="lrow">
        <span class="av"><i class="cell"><svg class="s20"><use href="#eye"/></svg></i><i></i><i class="cell"></i><i class="cell"></i></span>
        <span class="lab"><svg class="chev"><use href="#chev"/></svg><i class="lsw"></i></span><b class="idx">2</b><b class="lname"><svg class="s24"><use href="#star"/></svg><span><span class="zh">形状图层</span> 1</span></b>
        <span class="sws"><i class="cell"><svg class="s24"><use href="#shy"/></svg></i><i class="cell dim"><svg class="s20"><use href="#sun"/></svg></i><i class="cell"><svg class="s22"><use href="#slash"/></svg></i><i></i><i></i><i class="cell"></i><i class="cell"></i><i class="cell"><svg class="s22"><use href="#cube"/></svg></i></span>
        <span class="parent"><svg class="s24"><use href="#swirl"/></svg><span class="pick pick--tl"><select aria-label="Parent of layer 2"><option>None</option></select><svg class="s16"><use href="#chevd"/></svg></span></span>
      </div>
    </div>
    <div class="graph">
      <div class="nav"><i class="knob knob--l"></i><i class="nav__bar"></i><i class="knob knob--r"></i></div>
      <div class="ruler"><span class="tick tick--start tick--major"><b>0:00f</b></span><span class="tick"><b>10f</b></span><span class="tick"><b>20f</b></span><span class="tick"><b>30f</b></span><span class="tick"><b>40f</b></span><span class="tick"><b>50f</b></span><span class="tick tick--major"><b>01:00f</b></span><span class="tick"><b>10f</b></span><span class="tick"><b>20f</b></span><span class="tick"><b>30f</b></span><span class="tick"><b>40f</b></span><span class="tick"><b>50f</b></span><span class="tick tick--major tick--end"><b>02:00f</b></span></div>
      <div class="work"><i class="knob knob--l"></i><i class="work__bar"></i><i class="knob knob--r"></i></div>
      <div class="cache"></div>
      <div class="track"></div><div class="track"></div>
      <div class="empty"></div>
      <div class="cti"><div class="cti__line"><svg><use href="#playhead"/></svg></div></div>
    </div>
    <div class="rail"><svg class="s22 h28"><use href="#markerbin"/></svg><svg class="s28"><use href="#compbtn"/></svg></div>
  </div>
  <footer class="tlfoot">
    <div class="tlfoot__icons"><span class="onbox"><svg class="s22"><use href="#layers1"/></svg></span><svg class="s22"><use href="#layers2"/></svg><svg class="s22"><use href="#layers3"/></svg></div>
    <button class="toggle">Toggle Switches / Modes</button>
    <div class="zoomer"><svg class="mt1"><use href="#mount1"/></svg><input type="range" min="0" max="100" value="100" aria-label="Zoom"><svg class="mt2"><use href="#mount2"/></svg></div>
    <div class="hscroll hscroll--tl"><i class="hscroll__thumb"></i></div>
  </footer>
</section>
</body>
</html>
```
FILE: styles.css
```css
:root {
  --panel: #272727;
  --gap: #161616;
  --text: #9a9a9a;
  --bright: #c8c8c8;
  --icon: #b0b0b0;
  --blue: #2d8ceb;
  --tan: #a99676;
}
* { box-sizing: border-box; }
html, body { height: 100%; }
body {
  margin: 0;
  display: grid;
  grid-template-rows: 46px 32px 50px minmax(0, 1262fr) minmax(0, 710fr);
  background: var(--gap);
  color: var(--text);
  font: 21px/26px "Noto Sans", "Noto Sans CJK SC", sans-serif;
  overflow: hidden;
}
h1, h2, h3, p, ul { margin: 0; padding: 0; font-weight: 400; font-size: inherit; }
ul { list-style: none; }
i { font-style: normal; display: block; }
svg { display: block; flex: none; fill: currentColor; overflow: visible; }
button, input, select { font: inherit; color: inherit; border: 0; background: none; padding: 0; margin: 0; border-radius: 0; outline: 0; }
button, label, h3, th, td, span { white-space: nowrap; }
.sprite { position: absolute; width: 0; height: 0; }
.zh { font-family: "Noto Sans CJK SC", sans-serif; font-size: 24px; line-height: 1; }
.blue { color: var(--blue); }

.s14 { width: 14px; height: 14px; }
.s16 { width: 16px; height: 14px; }
.s18 { width: 18px; height: 24px; }
.s20 { width: 20px; height: 20px; }
.s22 { width: 22px; height: 22px; }
.s24 { width: 24px; height: 24px; }
.s28 { width: 28px; height: 28px; }
.s30 { width: 30px; height: 30px; }
.s34 { width: 34px; height: 24px; }
.s36 { width: 36px; height: 34px; }
.s42 { width: 42px; height: 30px; }
.s46 { width: 46px; height: 26px; }
.w32 { width: 32px; height: 32px; }
.w40 { width: 40px; height: 36px; }
.h22 { height: 22px; }
.h24 { height: 24px; }
.h28 { height: 28px; }
.h32 { height: 32px; }
.h34 { height: 34px; }

/* system menu bar */
.menubar {
  display: flex;
  align-items: center;
  background: #adadad;
  border-bottom: 2px solid #000;
  color: #000;
  font-family: Inter, "Noto Sans CJK SC", sans-serif;
  font-size: 27px;
}
.menubar__menus { display: flex; align-items: center; gap: 38px; width: 1440px; padding-left: 42px; }
.ic-apple { width: 28px; height: 34px; margin-bottom: 6px; }
.menu--app { font-weight: 700; font-size: 28px; }
.menubar__apps { display: flex; align-items: center; gap: 19px; }
.lyric { margin-left: 90px; font-size: 28px; }
.menubar__status {
  display: grid;
  grid-template-columns: 51px 45px 45px 46px 48px 76px 62px 50px 62px 63px 54px 77px 66px 231px 63px 56px 36px;
  align-items: center;
  margin-left: auto;
  padding-right: 46px;
}
.sensor { display: grid; width: 52px; justify-items: center; font-size: 20px; line-height: 22px; }
.sensor b { font-weight: 400; font-size: 21px; }
.sensor small { font-size: 14px; line-height: 14px; }
.charge { font-size: 23px; }
.ime { width: 32px; height: 32px; border-radius: 4px; background: #000; color: #adadad; font-size: 24px; line-height: 30px; text-align: center; }

/* window title */
.titlebar { display: grid; grid-template-columns: 1fr auto 1fr; align-items: center; background: #f6f6f6; border-bottom: 1px solid #d0d0d0; border-radius: 8px 8px 0 0; }
.titlebar__lights { display: flex; gap: 14px; padding-left: 12px; }
.light { width: 22px; height: 22px; border-radius: 50%; background: #dcdcdc; border: 1px solid #cbcbcb; }
.light--edited { display: grid; place-items: center; }
.light--edited::after { content: ""; width: 6px; height: 6px; border-radius: 50%; background: #666; }
.titlebar__title { color: #b1b1b1; font-family: Inter, "Noto Sans CJK SC", sans-serif; font-size: 22px; white-space: nowrap; }

/* tools */
.toolbar { display: flex; align-items: center; padding-top: 2px; background: var(--panel); color: var(--icon); }
.tools { display: flex; align-items: center; height: 42px; padding: 0 6px; border-right: 2px solid #222; }
.tools--home { gap: 7px; padding-left: 10px; width: 81px; }
.grip { width: 6px; height: 38px; background: repeating-linear-gradient(#161616 0 2px, transparent 2px 4px); }
.tool { display: grid; place-items: center; width: 50px; height: 46px; }
.tool--on { width: 46px; margin: 0 2px; background: #161616; border: 1px solid #333; border-radius: 6px; color: var(--blue); }
.tools--last { width: 106px; }
.tools--axes { width: 192px; padding-left: 40px; }
.tool--small { width: 45px; }
.tool--small.tool--on { width: 41px; height: 40px; }
.snapping { display: flex; align-items: center; gap: 6px; margin-left: 15px; color: var(--text); }
.snap-ic { margin-left: 23px; }
.workspaces { display: flex; align-items: center; gap: 87px; height: 46px; margin-left: auto; padding-left: 47px; border-left: 2px solid #191919; color: var(--text); }
.ws--on { display: flex; align-items: center; gap: 24px; margin-right: -42px; color: #2d9bf0; }
.more { margin: 0 18px 0 82px; }
.help { display: flex; align-items: center; height: 46px; gap: 26px; padding: 0 10px 0 12px; border-left: 2px solid #303030; }
.sync { width: 38px; height: 22px; }
.searchbox { display: flex; align-items: center; gap: 22px; height: 38px; border: 2px solid #303030; border-radius: 6px; background: #161616; color: #c0c0c0; }
.searchbox input { flex: 1; min-width: 0; }
.searchbox--help { width: 386px; padding-left: 8px; }

.check { appearance: none; display: grid; place-items: center; width: 28px; height: 28px; flex: none; border: 4px solid #909090; border-radius: 4px; }
.check:checked { background: #909090; }
.check:checked::after { content: ""; width: 18px; height: 10px; border-left: 4px solid #272727; border-bottom: 4px solid #272727; transform: translateY(-3px) rotate(-45deg); }

/* main panels */
.panels { display: grid; grid-template-columns: 640px minmax(0, 1fr) 436px; gap: 8px; padding: 8px 2px 0; }
.project, .viewer, .side { min-height: 0; background: var(--panel); }
.project { display: flex; flex-direction: column; }
.tabs { display: flex; height: 52px; flex: none; }
.tab { display: flex; align-items: center; height: 52px; padding-top: 7px; border-bottom: 4px solid transparent; }
.tab--on { color: var(--bright); border-bottom-color: #b5b5b5; gap: 20px; }
.project .tabs { padding-left: 23px; gap: 74px; }
.info { display: flex; gap: 10px; height: 227px; padding: 16px 12px; flex: none; }
.thumb { display: flex; gap: 4px; width: 129px; height: 130px; padding: 11px 0 0 13px; background: #fff; border: 2px solid #000; }
.thumb__big { width: 70px; height: 106px; background: #d8d8d8; }
.thumb__small { width: 22px; height: 84px; margin-top: 11px; background: #d8d8d8; }
.info__text { margin-top: -2px; font-size: 19px; color: #979797; }
.info__name { display: flex; align-items: center; font-size: 21px; height: 24px; margin-bottom: 1px; }
.tri { width: 0; border: 7px solid transparent; border-top: 10px solid #eee; border-bottom: 0; margin: 0 8px 0 4px; }
.searchbox--project { margin: 0 12px 12px; padding-left: 12px; flex: none; }

.files { flex: 1; min-height: 0; overflow: hidden; margin: 1px 2px 0; border-top: 2px solid #000; border-bottom: 2px solid #000; background: #242424; }
.filetable { width: 100%; table-layout: fixed; border-collapse: separate; border-spacing: 0; }
.c-tw { width: 31px; } .c-name { width: 204px; } .c-tag { width: 42px; } .c-type { width: 154px; } .c-size { width: 96px; } .c-rate { width: 75px; } .c-bar { width: 34px; }
.filetable th { height: 38px; padding: 0; background: #323232; border-bottom: 2px solid #000; font-weight: 400; text-align: left; }
.filetable .th { background: linear-gradient(#111, #111) 0 8px / 2px 22px no-repeat, #323232; font-size: 18px; padding: 2px 0 0 11px; color: var(--text); }
.tagicon { color: var(--icon); }
.th__sort { display: flex; align-items: center; justify-content: space-between; padding-right: 8px; }
.sortmark { width: 0; border: 12px solid transparent; border-bottom: 10px solid var(--blue); border-top: 0; }
.th__rate { display: block; width: 90px; border-right: 2px solid #111; line-height: 24px; }
.filetable td { height: 38px; padding: 2px 0 0 13px; border-bottom: 2px solid #1f1f1f; }
.filetable td.tw { padding: 0 0 0 8px; }
.filetable .nm { padding: 0 4px 0 1px; color: #919191; }
.chev { width: 8px; height: 16px; color: var(--icon); }
.nm svg, .nm .lbl { display: inline-block; vertical-align: middle; }
.ci { width: 32px; height: 28px; color: var(--icon); }
.ci--folder { width: 32px; height: 24px; }
.lbl { width: 166px; height: 36px; margin-left: 2px; padding-left: 4px; line-height: 36px; }
.dots { font-size: 16px; }
.filetable td:nth-child(3) { padding: 0 0 0 10px; }
.sw { width: 20px; height: 20px; background: var(--tan); border: 1px solid #1b1b1b; }
.sw--y { background: #e4da4c; }
.sel td { background: #323232; }
.sel .lbl { background: #a0a0a0; color: #232323; font-weight: 600; }
.filetable .bar { padding: 6px 0 0; vertical-align: top; background: linear-gradient(var(--panel) 36px, #1d1d1d 36px); }
.tree { width: 26px; height: 24px; margin: 0 auto 6px; color: var(--icon); }
.thumbbar { width: 30px; height: 636px; margin: 0 auto; border-radius: 15px; background: #323232; }
.projectfoot { display: flex; align-items: center; gap: 14px; height: 34px; flex: none; padding: 0 34px 0 8px; color: var(--icon); }
.projectfoot__icons { display: flex; align-items: center; gap: 18px; }
.bpc { width: 92px; height: 32px; border: 2px solid #303030; border-radius: 6px; background: #1d1d1d; color: var(--text); font-size: 19px; }
.hscroll { flex: 1; height: 34px; background: #1d1d1d; padding: 1px 2px; }
.hscroll__thumb { width: 82px; height: 30px; border-radius: 15px; background: #323232; }

.viewer { position: relative; display: flex; flex-direction: column; padding: 0 2px 4px; }
.tabs--viewer { padding-left: 22px; gap: 82px; margin-bottom: 4px; }
.tab--comp { margin-left: -9px; }
.chip { width: 20px; height: 20px; margin: 0 20px 4px 0; background: var(--tan); flex: none; }
.canvas { flex: 1; display: flex; gap: 6px; align-items: flex-start; padding: 12px; border: 2px solid #303030; border-radius: 6px; background: #262626; }
.outline { border: 2px solid #636363; color: #a8a8a8; display: flex; align-items: center; justify-content: center; height: 60px; padding-bottom: 2px; }
.outline--gif { width: 200px; height: 80px; }
.outline--gear { width: 80px; height: 80px; color: #c4c4c4; padding: 0; }
.gear { width: 40px; height: 40px; }

/* settings window floating over the viewer */
.dialog { position: absolute; left: 308px; top: 72px; width: 426px; padding-bottom: 18px; border: 1px solid #3a3a3a; border-radius: 8px; background: var(--panel); box-shadow: 0 8px 30px rgba(0, 0, 0, .3); }
.dialog__bar { display: grid; grid-template-columns: 22px 1fr 22px; align-items: center; height: 31px; padding: 0 11px 1px; border-radius: 7px 7px 0 0; background: linear-gradient(#e6e6e6, #cdcdcd); color: #4a4a4a; text-align: center; }
.dialog__bar h2 { font-size: 21px; }
.close { display: grid; place-items: center; width: 22px; height: 22px; border-radius: 50%; background: #fc5b57; }
.close svg { width: 10px; height: 10px; }
.form { padding: 10px 19px 0; }
.opt { display: flex; align-items: center; gap: 6px; height: 50px; padding-bottom: 2px; }
.radio { appearance: none; width: 28px; height: 28px; flex: none; border: 4px solid #909090; border-radius: 50%; }
.radio:checked { border: 2px solid transparent; background: #909090 padding-box; }
.path { display: flex; align-items: center; justify-content: space-between; padding: 12px 14px 22px 0; }
.ghost { width: 324px; height: 60px; padding: 0 0 0 13px; border-radius: 4px; background: #292929; color: #383838; }
.browse { color: #d0d0d0; }
hr { height: 3px; margin: 0 -4px 0 -10px; border: 0; background: #303030; }
.field { display: flex; align-items: center; justify-content: space-between; height: 56px; margin-bottom: 16px; }
.field > .zh { padding-bottom: 4px; }
.field--width { margin-top: 19px; }
.field .opt { height: 48px; align-self: flex-start; }
.box { width: 153px; height: 56px; padding-left: 10px; border: 2px solid #303030; border-right: 0; border-radius: 6px 0 0 6px; background: #161616; color: var(--bright); }
.pick { display: grid; align-items: center; width: 211px; height: 56px; color: var(--bright); }
.pick select { appearance: none; grid-area: 1 / 1; width: 100%; height: 100%; padding-left: 12px; border: 2px solid #303030; border-right: 0; border-radius: 6px 0 0 6px; background: #1d1d1d; }
.pick svg { grid-area: 1 / 1; justify-self: end; margin-right: 11px; height: 10px; }
.checks { padding-bottom: 11px; }
hr + .checks { padding: 10px 0; }
.loop { display: flex; align-items: center; justify-content: space-between; padding-right: 29px; }
.ghost--loop { width: 80px; height: 50px; }
.actions { display: flex; gap: 6px; }
.actions .outline { flex: 1; }
.actions .outline--q { flex: none; width: 60px; }
.highlight { position: absolute; left: 1px; top: 38px; width: 405px; height: 962px; border: 5px solid #ff2600; border-radius: 22px; pointer-events: none; }

.side { display: grid; grid-template-columns: minmax(0, 1fr) 24px; }
.side__col { display: flex; flex-direction: column; margin: 0 2px; }
.side__tab { display: flex; align-items: center; justify-content: space-between; height: 60px; padding: 2px 20px 0 22px; border-bottom: 4px solid #1a1a1a; flex: none; }
.side__tab:first-child { height: 58px; }
.effects { border-bottom: 2px solid #1a1a1a; }
.side__tab.side__tab--on { height: 60px; padding-top: 0; border: 0; color: var(--bright); }
.searchbox--fx { margin: 2px 8px 4px 9px; padding-left: 12px; height: 40px; }
.fx { border: solid #000; border-width: 2px 0; background: #252525; }
.fx li { display: flex; align-items: center; gap: 10px; height: 34px; padding: 0 0 2px 12px; border-bottom: 1px solid #1f1f1f; color: #939393; }
.fxfoot { display: flex; justify-content: flex-end; height: 39px; align-items: center; padding: 0 14px 4px 0; color: var(--icon); }
.side__scroll { background: #1d1d1d; padding: 2px; }
.side__scroll i { height: 1018px; border-radius: 10px; background: #323232; }

/* timeline */
.timeline { display: flex; flex-direction: column; margin: 8px 2px 2px; background: var(--panel); min-height: 0; }
.comptabs { display: flex; gap: 109px; height: 64px; padding-left: 52px; flex: none; }
.ctab { display: flex; align-items: center; height: 52px; padding-top: 6px; border-bottom: 4px solid transparent; }
.ctab .chip { margin: 0 22px 3px 0; }
.deltri { width: 10px; height: 12px; margin-right: 8px; background: #9a9a9a; clip-path: polygon(evenodd, 0 0, 100% 0, 50% 100%, 0 0, 24% 14%, 50% 74%, 76% 14%, 24% 14%); }
.ctab--on { margin-left: -32px; color: var(--bright); border-bottom-color: #b5b5b5; }
.ctab--on .x { margin-right: 18px; color: var(--text); }
.ctab--on svg { margin-left: 18px; }
.tl { flex: 1; min-height: 0; display: grid; grid-template-columns: 1066px minmax(0, 1fr) 35px; }
.layers { display: flex; flex-direction: column; margin-left: 2px; border-right: 2px solid #000; border-bottom: 2px solid #000; }
.layers__top { display: flex; align-items: center; height: 62px; padding-left: 20px; }
.time { display: grid; width: 180px; padding: 0 0 7px 3px; color: #33a0f5; font-size: 19px; line-height: 22px; }
.time strong { font-weight: 600; font-size: 30px; line-height: 34px; }
.time span { color: #1a72b4; }
.searchbox--tl { width: 462px; height: 40px; padding-left: 10px; margin-bottom: 10px; }
.modes { display: flex; align-items: center; justify-content: space-between; width: 342px; margin: 0 0 10px 30px; color: var(--icon); }
.modes__mid { display: flex; align-items: center; gap: 23px; }
.lrow { display: grid; grid-template-columns: 134px 64px 66px 260px 274px 234px 1fr; align-items: center; height: 34px; flex: none; background: #303030; border-bottom: 2px solid #262626; color: var(--icon); }
.lrow--head { height: 40px; border: solid #000; border-width: 2px 0; background: #323232; font-size: 18px; }
.av { display: grid; grid-template-columns: 30px 30px 30px 30px; justify-items: center; align-items: center; padding-left: 7px; }
.col { display: flex; align-items: center; height: 22px; padding-left: 9px; border-left: 2px solid #111; color: var(--text); }
.col svg { color: var(--icon); }
.col--tag { justify-content: center; padding: 0 0 0 6px; }
.sws { display: grid; grid-template-columns: repeat(8, 30px); justify-items: center; align-items: center; padding-left: 8px; color: var(--icon); }
.col.sws { display: grid; padding-left: 6px; }
.sws em { font: italic 27px/26px "Liberation Serif", serif; color: var(--icon); }
.cell { display: grid; place-items: center; width: 26px; height: 26px; background: #222; }
.dim { color: #777; }
.lab { display: flex; align-items: center; gap: 13px; padding-left: 15px; }
.lsw { width: 24px; height: 24px; background: #6a7fe0; }
.idx { padding-left: 14px; color: #9a9a9a; font-weight: 600; }
.lname { display: flex; align-items: center; gap: 12px; padding-left: 7px; font-weight: 600; color: #919191; }
.lname svg { color: var(--icon); }
.parent { display: flex; align-items: center; gap: 13px; padding-left: 10px; }
.pick--tl { width: 178px; height: 28px; }
.pick--tl select { border: 0; border-radius: 0; }

.graph { position: relative; display: flex; flex-direction: column; overflow: hidden; background: var(--panel); border-top: 2px solid #1a1a1a; }
.nav { display: flex; align-items: center; height: 20px; flex: none; padding-left: 2px; background: #212121; }
.knob { width: 12px; height: 16px; background: var(--blue); flex: none; }
.knob--l { border-radius: 8px 0 0 8px; }
.knob--r { border-radius: 0 8px 8px 0; }
.nav__bar { width: 158px; height: 20px; border: 2px solid #000; background: linear-gradient(var(--blue), var(--blue)) 38px 0 / 3px 100% no-repeat, #6b6b6b; }
.ruler { display: grid; grid-template-columns: repeat(12, 1fr) 0; height: 38px; flex: none; padding: 0 85px 0 16px; background: var(--panel); font-size: 19px; }
.tick { display: flex; align-items: flex-end; min-width: 0; background: linear-gradient(#999, #999) 0 100% / 2px 10px no-repeat; }
.tick--major { background-size: 2px 16px; }
.tick--end { width: 2px; }
.tick b { align-self: flex-start; font-weight: 400; line-height: 30px; transform: translateX(-50%); }
.tick--start b { transform: none; margin-left: -16px; }
.work { display: flex; height: 34px; flex: none; padding: 0 73px 0 4px; border: solid #000; border-width: 2px 0; background: #212121; }
.work .knob { height: 30px; width: 12px; }
.work__bar { flex: 1; background: #5f5f5f; border-top: 2px solid #707070; }
.cache { height: 8px; flex: none; margin-left: 16px; background: #12c021; border-bottom: 2px solid #000; }
.track { height: 32px; flex: none; margin: 0 0 2px 16px; background: linear-gradient(to right, transparent calc(100% - 85px), rgba(0, 0, 0, .08) calc(100% - 85px)), #525c90; border: solid #5c6698; border-width: 2px 0 0 2px; border-bottom: 2px solid #414a78; }
.empty { flex: 1; margin: 0 85px 0 16px; background: #343434; }
.cti { position: absolute; left: 16px; right: 85px; top: 30px; bottom: 0; pointer-events: none; }
.cti__line { width: 2px; height: 100%; margin-left: 25.83%; background: linear-gradient(transparent 26px, var(--blue) 26px); }
.cti__line svg { width: 22px; height: 26px; margin-left: -10px; }
.rail { display: flex; flex-direction: column; align-items: center; gap: 10px; padding-top: 66px; border-left: 1px solid #111; background: #232323; color: var(--icon); }
.tlfoot { display: grid; grid-template-columns: 531px 532px 219px minmax(0, 1fr); align-items: center; height: 34px; flex: none; color: var(--icon); }
.tlfoot__icons { display: flex; align-items: center; gap: 14px; padding-left: 8px; }
.onbox { display: grid; place-items: center; width: 32px; height: 30px; margin-right: -4px; background: #1d1d1d; color: var(--blue); }
.toggle { width: 268px; height: 30px; border: 2px solid #303030; border-radius: 6px; background: #1d1d1d; color: var(--text); line-height: 22px; }
.zoomer { display: flex; align-items: center; padding-left: 16px; }
.mt1 { width: 20px; height: 8px; margin-right: 30px; }
.mt2 { width: 34px; height: 14px; margin-left: 18px; }
.zoomer input { appearance: none; width: 92px; height: 20px; background: linear-gradient(#454545, #454545) 0 50% / 100% 4px no-repeat; }
.zoomer input::-webkit-slider-thumb { appearance: none; width: 20px; height: 20px; border: 4px solid #909090; border-radius: 50%; background: var(--panel); }
.hscroll--tl .hscroll__thumb { width: 140px; }
```
